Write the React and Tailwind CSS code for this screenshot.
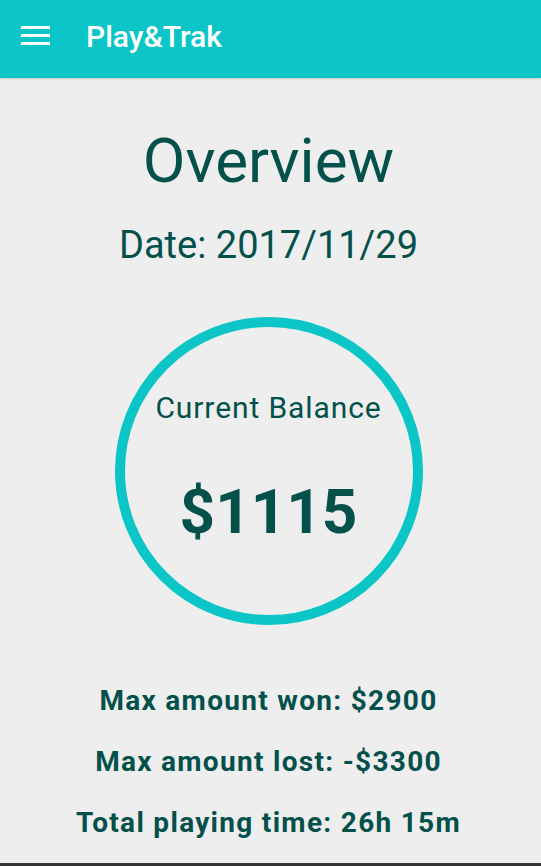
export default function App() {
  const font = { fontFamily: "Roboto, 'Noto Sans', sans-serif" };
  return (
    <div className="min-h-[866px] w-full bg-[#eeeeee] flex flex-col" style={font}>
      <header className="h-[78px] bg-[#0cc5c6] flex items-start shadow-[0_1px_2px_rgba(0,0,0,0.15)]">
        <div className="ml-[21px] mt-[26px] flex flex-col gap-[5px]">
          <div className="w-[29px] h-[3px] bg-white" />
          <div className="w-[29px] h-[3px] bg-white" />
          <div className="w-[29px] h-[3px] bg-white" />
        </div>
        <div className="ml-[36px] mt-[19px] text-[30px] leading-[36px] font-medium text-white">
          Play&amp;Trak
        </div>
      </header>
      <main className="flex flex-col items-center pt-[47px] pr-[4px] text-[#04504b]">
        <h1 className="text-[62px] leading-[72px] font-normal">Overview</h1>
        <div className="mt-[26px] text-[38px] leading-[44px]">Date: 2017/11/29</div>
        <div className="mt-[50px] w-[308px] h-[308px] rounded-full border-[10px] border-[#0cc5c6] flex flex-col items-center pt-[63px]">
          <div className="text-[30px] leading-[36px] tracking-[0.9px]">Current Balance</div>
          <div className="mt-[50px] text-[62px] leading-[72px] font-bold">$1115</div>
        </div>
        <div className="mt-[59px] flex flex-col items-center gap-[27px] text-[28px] leading-[34px] font-bold tracking-[1.3px]">
          <div>Max amount won: $2900</div>
          <div>Max amount lost: -$3300</div>
          <div>Total playing time: 26h 15m</div>
        </div>
      </main>
      <div className="mt-auto h-[3px] bg-[#333333]" />
    </div>
  );
}
